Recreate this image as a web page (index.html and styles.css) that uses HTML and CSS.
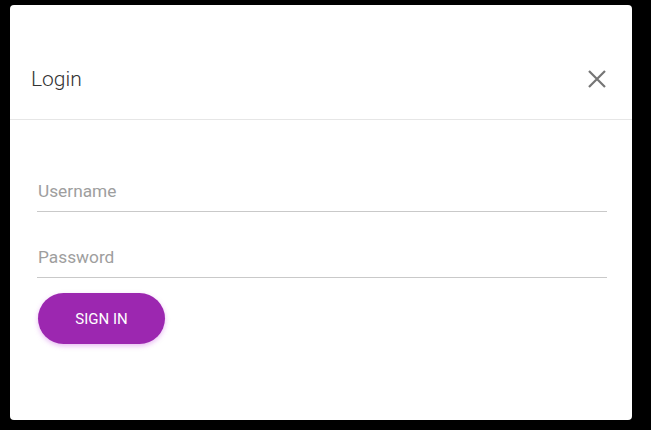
FILE: index.html
```html
<!DOCTYPE html>
<html>
<head>
<meta charset="utf-8">
<link rel="stylesheet" href="styles.css">
</head>
<body>
<div class="card">
  <div class="header">
    <div class="title">Login</div>
    <button class="close" aria-label="Close">
      <svg width="18" height="18" viewBox="0 0 18 18"><path d="M1 1 L17 17 M17 1 L1 17" stroke="#757575" stroke-width="2.2" fill="none"/></svg>
    </button>
  </div>
  <div class="body">
    <input class="field" type="text" placeholder="Username">
    <input class="field second" type="password" placeholder="Password">
    <button class="signin">SIGN IN</button>
  </div>
</div>
</body>
</html>
```
FILE: styles.css
```css
html, body { margin: 0; padding: 0; background: #000; }
body { font-family: Roboto, "Noto Sans", sans-serif; }
.card {
  margin: 5px 19px 0 10px;
  height: 415px;
  background: #fff;
  border-radius: 4px;
  box-sizing: border-box;
}
.header {
  display: flex;
  align-items: center;
  justify-content: space-between;
  padding: 54px 26px 21px 21px;
  height: 115px;
  box-sizing: border-box;
  border-bottom: 1px solid #e6e6e6;
}
.title {
  font-size: 21px;
  font-weight: 300;
  color: #333;
  line-height: 40px;
}
.close {
  border: none;
  background: none;
  padding: 0;
  width: 18px;
  height: 18px;
  display: flex;
}
.body {
  padding: 51px 25px 0 27px;
  display: flex;
  flex-direction: column;
  align-items: flex-start;
}
.field {
  width: 100%;
  box-sizing: border-box;
  height: 41px;
  border: none;
  border-bottom: 1px solid #c9c9c9;
  font-family: Roboto, sans-serif;
  font-size: 17.3px;
  padding: 0 0 0 1px;
  margin: 0;
  outline: none;
  background: transparent;
}
.field::placeholder { color: #9e9e9e; }
.second { margin-top: 25px; }
.signin {
  margin-top: 15px;
  margin-left: 1px;
  width: 127px;
  height: 51px;
  border: none;
  border-radius: 26px;
  background: #9c27b0;
  color: #fff;
  font-family: Roboto, sans-serif;
  font-size: 15px;
  font-weight: 400;
  box-shadow: 0 2px 5px rgba(190, 60, 220, 0.35);
}
```
